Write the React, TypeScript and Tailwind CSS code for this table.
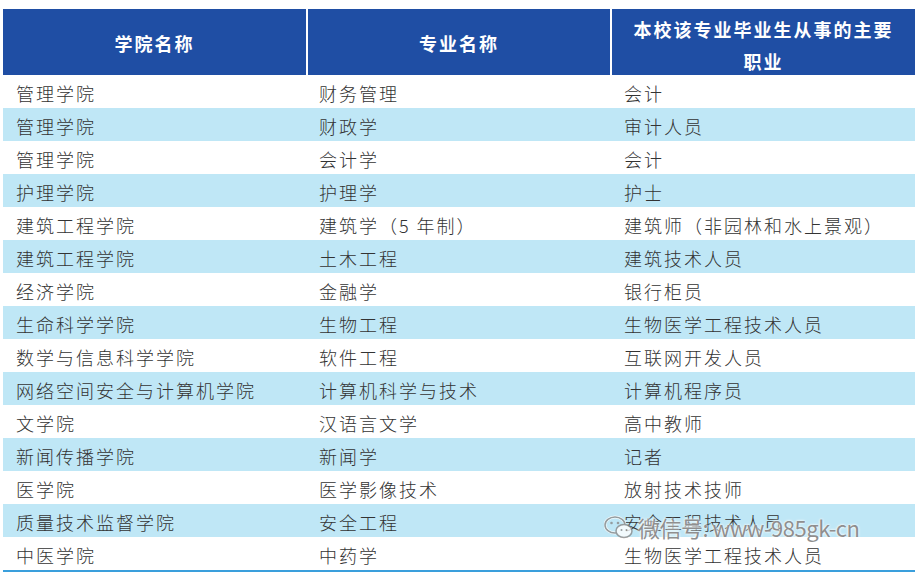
import React from "react";

const rows: [string, string, string][] = [
  ["管理学院", "财务管理", "会计"],
  ["管理学院", "财政学", "审计人员"],
  ["管理学院", "会计学", "会计"],
  ["护理学院", "护理学", "护士"],
  ["建筑工程学院", "建筑学（5 年制）", "建筑师（非园林和水上景观）"],
  ["建筑工程学院", "土木工程", "建筑技术人员"],
  ["经济学院", "金融学", "银行柜员"],
  ["生命科学学院", "生物工程", "生物医学工程技术人员"],
  ["数学与信息科学学院", "软件工程", "互联网开发人员"],
  ["网络空间安全与计算机学院", "计算机科学与技术", "计算机程序员"],
  ["文学院", "汉语言文学", "高中教师"],
  ["新闻传播学院", "新闻学", "记者"],
  ["医学院", "医学影像技术", "放射技术技师"],
  ["质量技术监督学院", "安全工程", "安全工程技术人员"],
  ["中医学院", "中药学", "生物医学工程技术人员"],
];

export default function App() {
  return (
    <div
      className="relative w-[924px] h-[572px] overflow-hidden bg-white pt-[9px] pl-[3px]"
      style={{ fontFamily: '"Noto Sans CJK SC", "Noto Sans", sans-serif' }}
    >
      {/* Header */}
      <div className="flex gap-[2px] h-[66px] text-white font-bold text-[18px] tracking-[2px]">
        <div className="w-[303px] bg-[#1f4ea4] flex items-center justify-center pt-[3px]">
          学院名称
        </div>
        <div className="w-[302px] bg-[#1f4ea4] flex items-center justify-center pt-[3px]">
          专业名称
        </div>
        <div className="w-[303px] bg-[#1f4ea4] flex items-center justify-center text-center leading-[32px] pt-[6px] whitespace-nowrap">
          本校该专业毕业生从事的主要
          <br />
          职业
        </div>
      </div>

      {/* Body */}
      <div className="w-[912px]">
        {rows.map((r, i) => (
          <div
            key={i}
            className={
              "flex h-[33px] items-center pt-[3px] text-[18px] tracking-[2px] text-[#333] font-light " +
              (i % 2 === 1 ? "bg-[#bfe7f6]" : "bg-white")
            }
          >
            <div className="w-[305px] pl-[13px] whitespace-nowrap">{r[0]}</div>
            <div className="w-[304px] pl-[11px] whitespace-nowrap">{r[1]}</div>
            <div className="flex-1 pl-[12px] whitespace-nowrap">{r[2]}</div>
          </div>
        ))}
      </div>
      <div className="w-[912px] h-[4px] bg-[#3a9fdc]" />

      {/* Watermark */}
      <div className="absolute left-[604px] top-[511px] flex items-center gap-[4px] whitespace-nowrap">
        <svg width="30" height="26" viewBox="0 0 30 26" className="opacity-80">
          <ellipse cx="11" cy="10" rx="10" ry="8" fill="none" stroke="#fff" strokeWidth="3" />
          <ellipse cx="11" cy="10" rx="10" ry="8" fill="none" stroke="#8a8a8a" strokeWidth="1.5" />
          <ellipse cx="20" cy="16" rx="8" ry="6.5" fill="#fff" stroke="#8a8a8a" strokeWidth="1.5" />
          <circle cx="7.5" cy="8" r="1.3" fill="#8a8a8a" />
          <circle cx="14" cy="8" r="1.3" fill="#8a8a8a" />
          <circle cx="17.5" cy="15" r="1" fill="#8a8a8a" />
          <circle cx="22.5" cy="15" r="1" fill="#8a8a8a" />
        </svg>
        <span
          className="text-[22px] tracking-[-0.5px] text-[#8f8f8f]"
          style={{ textShadow: "0 0 2px #fff, 0 0 3px #fff" }}
        >
          微信号: www-985gk-cn
        </span>
      </div>
    </div>
  );
}
